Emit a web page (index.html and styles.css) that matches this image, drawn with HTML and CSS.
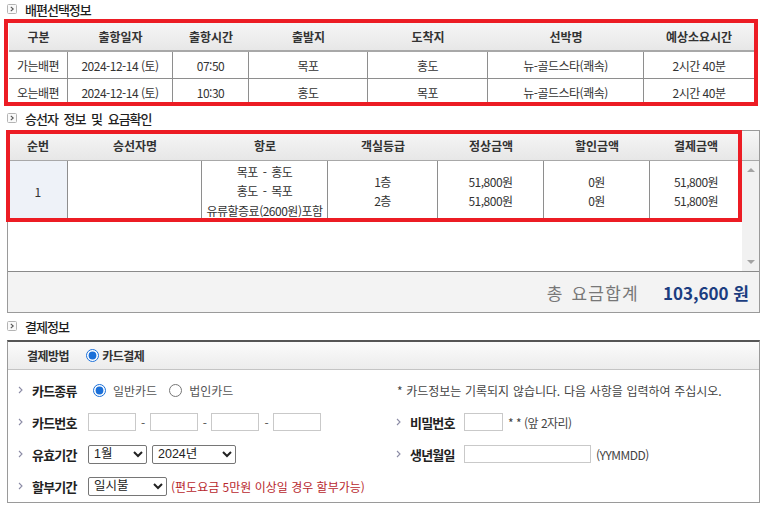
FILE: index.html
```html
<!DOCTYPE html>
<html lang="ko">
<head>
<meta charset="utf-8">
<title>배편 예약</title>
<link rel="stylesheet" href="styles.css">
</head>
<body>
<div class="page">

  <h2 class="sec-title sec-title-first">
    <svg class="sec-icon" width="10" height="10" viewBox="0 0 10 10"><rect x="0.5" y="0.5" width="9" height="9" rx="1" fill="#fafafa" stroke="#b4b4b4"/><polyline points="3.8,2.8 6.2,5 3.8,7.2" fill="none" stroke="#555" stroke-width="1.1"/></svg>
    배편선택정보
  </h2>

  <div class="block block-ships">
    <div class="grid grid-ships">
      <div class="th">구분</div>
      <div class="th">출항일자</div>
      <div class="th">출항시간</div>
      <div class="th">출발지</div>
      <div class="th">도착지</div>
      <div class="th">선박명</div>
      <div class="th">예상소요시간</div>

      <div class="td">가는배편</div>
      <div class="td">2024-12-14 (토)</div>
      <div class="td">07:50</div>
      <div class="td">목포</div>
      <div class="td">홍도</div>
      <div class="td">뉴-골드스타(쾌속)</div>
      <div class="td last">2시간 40분</div>

      <div class="td">오는배편</div>
      <div class="td">2024-12-14 (토)</div>
      <div class="td">10:30</div>
      <div class="td">홍도</div>
      <div class="td">목포</div>
      <div class="td">뉴-골드스타(쾌속)</div>
      <div class="td last">2시간 40분</div>
    </div>
    <div class="mark mark-ships"></div>
  </div>

  <h2 class="sec-title sec-title-mid">
    <svg class="sec-icon" width="10" height="10" viewBox="0 0 10 10"><rect x="0.5" y="0.5" width="9" height="9" rx="1" fill="#fafafa" stroke="#b4b4b4"/><polyline points="3.8,2.8 6.2,5 3.8,7.2" fill="none" stroke="#555" stroke-width="1.1"/></svg>
    승선자 정보 및 요금확인
  </h2>

  <div class="box box-fare">
    <div class="grid grid-fare-head">
      <div class="th">순번</div>
      <div class="th">승선자명</div>
      <div class="th">항로</div>
      <div class="th">객실등급</div>
      <div class="th">정상금액</div>
      <div class="th">할인금액</div>
      <div class="th">결제금액</div>
      <div class="th"></div>
    </div>
    <div class="fare-body">
      <div class="grid grid-fare">
        <div class="td no">1</div>
        <div class="td"></div>
        <div class="td lines route"><span>목포 - 홍도</span><span>홍도 - 목포</span><span>유류할증료(2600원)포함</span></div>
        <div class="td lines"><span>1층</span><span>2층</span></div>
        <div class="td lines"><span>51,800원</span><span>51,800원</span></div>
        <div class="td lines"><span>0원</span><span>0원</span></div>
        <div class="td lines last"><span>51,800원</span><span>51,800원</span></div>
      </div>
      <div class="scrollbar">
        <span class="arrow arrow-up"></span>
        <span class="arrow arrow-down"></span>
      </div>
    </div>
    <div class="total-row">
      <span class="total-label">총 요금합계</span>
      <span class="total-value">103,600 원</span>
    </div>
    <div class="mark mark-fare"></div>
  </div>

  <h2 class="sec-title sec-title-pay">
    <svg class="sec-icon" width="10" height="10" viewBox="0 0 10 10"><rect x="0.5" y="0.5" width="9" height="9" rx="1" fill="#fafafa" stroke="#b4b4b4"/><polyline points="3.8,2.8 6.2,5 3.8,7.2" fill="none" stroke="#555" stroke-width="1.1"/></svg>
    결제정보
  </h2>

  <div class="box box-pay">
    <div class="pay-head">
      <span class="pay-head-label">결제방법</span>
      <label class="pay-method"><input type="radio" name="method" checked>카드결제</label>
    </div>
    <div class="pay-body">
      <div class="label"><svg class="chev" width="5" height="8" viewBox="0 0 5 8"><polyline points="1,1 4,4 1,7" fill="none" stroke="#8c8ca6" stroke-width="1.1"/></svg>카드종류</div>
      <div class="field">
        <label class="opt"><input type="radio" name="ctype" checked>일반카드</label>
        <label class="opt opt-2"><input type="radio" name="ctype">법인카드</label>
      </div>
      <div class="note">* 카드정보는 기록되지 않습니다. 다음 사항을 입력하여 주십시오.</div>

      <div class="label"><svg class="chev" width="5" height="8" viewBox="0 0 5 8"><polyline points="1,1 4,4 1,7" fill="none" stroke="#8c8ca6" stroke-width="1.1"/></svg>카드번호</div>
      <div class="field">
        <input class="txt num" type="text"><span class="dash">-</span>
        <input class="txt num" type="text"><span class="dash">-</span>
        <input class="txt num" type="text"><span class="dash">-</span>
        <input class="txt num" type="text">
      </div>
      <div class="label label-right"><svg class="chev" width="5" height="8" viewBox="0 0 5 8"><polyline points="1,1 4,4 1,7" fill="none" stroke="#8c8ca6" stroke-width="1.1"/></svg>비밀번호</div>
      <div class="field">
        <input class="txt pw" type="text"><span class="hint">* * (앞 2자리)</span>
      </div>

      <div class="label"><svg class="chev" width="5" height="8" viewBox="0 0 5 8"><polyline points="1,1 4,4 1,7" fill="none" stroke="#8c8ca6" stroke-width="1.1"/></svg>유효기간</div>
      <div class="field">
        <select class="sel sel-month"><option>1월</option></select>
        <select class="sel sel-year"><option>2024년</option></select>
      </div>
      <div class="label label-right"><svg class="chev" width="5" height="8" viewBox="0 0 5 8"><polyline points="1,1 4,4 1,7" fill="none" stroke="#8c8ca6" stroke-width="1.1"/></svg>생년월일</div>
      <div class="field">
        <input class="txt birth" type="text"><span class="hint">(YYMMDD)</span>
      </div>

      <div class="label"><svg class="chev" width="5" height="8" viewBox="0 0 5 8"><polyline points="1,1 4,4 1,7" fill="none" stroke="#8c8ca6" stroke-width="1.1"/></svg>할부기간</div>
      <div class="field field-wide">
        <select class="sel sel-inst"><option>일시불</option></select>
        <span class="warn">(편도요금 5만원 이상일 경우 할부가능)</span>
      </div>
    </div>
  </div>

</div>
</body>
</html>
```

FILE: styles.css
```css
* { box-sizing: border-box; }

html, body {
  margin: 0;
  padding: 0;
  background: #ffffff;
}

body {
  font-family: "Noto Sans CJK KR", "Noto Sans", sans-serif;
  font-size: 12px;
  color: #333333;
  letter-spacing: -0.5px;
}

.page {
  width: 767px;
}

/* section titles */
.sec-title {
  display: flex;
  align-items: center;
  margin: 0 0 0 7px;
  height: 18px;
  font-size: 13px;
  font-weight: 500;
  color: #1e1e1e;
  letter-spacing: -1px;
  word-spacing: 3px;
}

.sec-icon {
  flex: none;
  margin-right: 8px;
}

.sec-title-first { margin-bottom: 5px; }
.sec-title-mid { height: 20px; margin-top: 2px; margin-bottom: 2px; }
.sec-title-pay { height: 20px; margin-top: 3px; margin-bottom: 4px; }

/* grids */
.grid {
  display: grid;
}

.th {
  display: flex;
  align-items: center;
  justify-content: center;
  font-weight: bold;
  color: #333333;
  letter-spacing: 0;
  background: linear-gradient(#f6f6f6, #e7e7e7);
}

.td {
  display: flex;
  align-items: center;
  justify-content: center;
  border-right: 1px solid #8e8e8e;
  border-bottom: 1px solid #8e8e8e;
  background: #ffffff;
}

.td.last { border-right: 0; }

/* ship table */
.block {
  position: relative;
}

.block-ships {
  margin-left: 9px;
  width: 745px;
  height: 83px;
}

.grid-ships {
  grid-template-columns: 59px 105px 76px 119px 120px 156px 110px;
  grid-template-rows: 29px 27px 27px;
}

.grid-ships .th {
  border-bottom: 2px solid #a8a8a8;
}

/* red annotation frames */
.mark {
  position: absolute;
  border: 4px solid #ec1c24;
  pointer-events: none;
}

.mark-ships {
  left: -5px;
  top: -4px;
  width: 754px;
  height: 87px;
}

.mark-fare {
  left: -2px;
  top: -1px;
  width: 736px;
  height: 92px;
}

/* boxes */
.box {
  position: relative;
  margin-left: 7px;
  width: 753px;
  border: 1px solid #9a9a9a;
}

.grid-fare-head {
  grid-template-columns: 60px 134px 126px 110px 106px 106px 92px 17px;
  height: 30px;
  border-bottom: 1px solid #a8a8a8;
}

.fare-body {
  display: flex;
  height: 110px;
}

.grid-fare {
  width: 734px;
  align-self: flex-start;
  grid-template-columns: 60px 134px 126px 110px 106px 106px 92px;
  grid-template-rows: 61px;
}

.td.no {
  background: #eef2f8;
}

.td.lines {
  flex-direction: column;
  line-height: 19px;
}

.td.route {
  line-height: 19.5px;
  white-space: nowrap;
  word-spacing: 2px;
}

.scrollbar {
  width: 17px;
  background: #f1f1f1;
  display: flex;
  flex-direction: column;
  justify-content: space-between;
  align-items: center;
  padding: 7px 0 7px;
}

.arrow {
  width: 0;
  height: 0;
  border-left: 4px solid transparent;
  border-right: 4px solid transparent;
}

.arrow-up { border-bottom: 4px solid #a3a3a3; }
.arrow-down { border-top: 4px solid #a3a3a3; }

.total-row {
  display: flex;
  justify-content: flex-end;
  align-items: center;
  gap: 24px;
  height: 41px;
  padding-right: 10px;
  border-top: 1px solid #8a8a8a;
  background: #f3f3f3;
  letter-spacing: 0;
}

.total-label {
  font-size: 17px;
  color: #777777;
  letter-spacing: 1.2px;
  word-spacing: 2px;
}

.total-value {
  font-size: 17px;
  font-weight: bold;
  color: #1b3d80;
}

/* payment */
.box-pay {
  border-top: 2px solid #555555;
}

.pay-head {
  display: flex;
  align-items: center;
  height: 28px;
  padding-left: 19px;
  border-bottom: 1px solid #c4c4c4;
  background: linear-gradient(#fbfbfb, #ececec);
  font-weight: bold;
  color: #333333;
}

.pay-method {
  display: flex;
  align-items: center;
}

.pay-method input {
  margin: 0 3px 0 17px;
}

.pay-body {
  display: grid;
  grid-template-columns: 80px 308px 68px 1fr;
  grid-auto-rows: 32px;
  align-items: center;
  padding-top: 4px;
}

.label {
  display: flex;
  align-items: center;
  padding-left: 10px;
  font-size: 13px;
  font-weight: bold;
  color: #222222;
  letter-spacing: -0.8px;
}

.label-right {
  padding-left: 0;
}

.chev {
  flex: none;
  margin-right: 9px;
}

.field {
  display: flex;
  align-items: center;
}

.field-wide {
  grid-column: 2 / 5;
}

.opt {
  display: flex;
  align-items: center;
  color: #555555;
  letter-spacing: 0;
}

.opt input {
  margin: 0 7px 0 5px;
}

.opt-2 input {
  margin-left: 12px;
}

input[type="radio"] {
  width: 13px;
  height: 13px;
  accent-color: #1a6fd8;
}

.note {
  grid-column: 3 / 5;
  padding-left: 1px;
  color: #444444;
  letter-spacing: -0.05px;
  word-spacing: 0.5px;
}

.txt {
  height: 18px;
  padding: 0 2px;
  border: 1px solid #c9c9c9;
  border-radius: 0;
  background: #ffffff;
  font-family: inherit;
  font-size: 12px;
}

.txt.num { width: 48px; }
.txt.pw { width: 39px; }
.txt.birth { width: 127px; }

.dash {
  margin: 0 5px;
  color: #555555;
}

.hint {
  margin-left: 5px;
  color: #444444;
}

.sel {
  height: 19px;
  padding: 0 1px;
  border: 1px solid #767676;
  border-radius: 2px;
  background: #ffffff;
  color: #222222;
  font-family: "Liberation Sans", "Noto Sans CJK KR", sans-serif;
  font-size: 12.5px;
  line-height: 15px;
  letter-spacing: 0;
}

.sel-month { width: 59px; }
.sel-year { width: 84px; margin-left: 5px; }
.sel-inst { width: 79px; }

.warn {
  margin-left: 4px;
  color: #b8282e;
  letter-spacing: 0;
}
```
